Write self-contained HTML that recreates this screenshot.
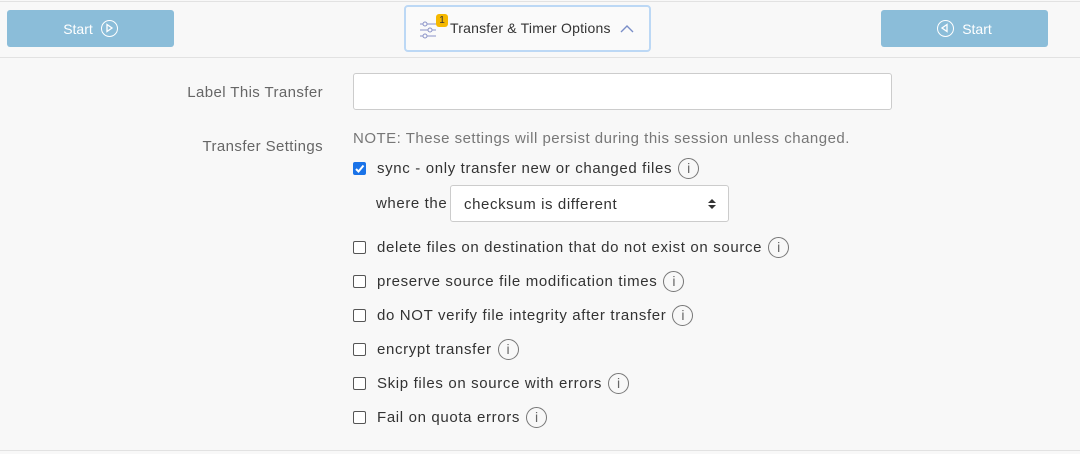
<!DOCTYPE html><html><head><style>
body{margin:0;width:1080px;height:454px;background:#f8f8f8;font-family:"Liberation Sans",sans-serif;position:relative;overflow:hidden;color:#333}
.a{position:absolute}
.btn{background:#8bbdd9;color:#fff;border-radius:3px;height:37px;top:10px;width:167px;font-size:14px;display:flex;align-items:center;justify-content:center;gap:8px}
.circ{width:17px;height:17px;border:1.5px solid #fff;border-radius:50%;box-sizing:border-box;display:inline-block;position:relative}
.lbl{color:#666;font-size:15px;right:757px;letter-spacing:0.4px}
.row{left:353px;font-size:15px;display:flex;align-items:center;height:22px;letter-spacing:0.65px}
.cb{width:13px;height:13px;border:1px solid #555;border-radius:2px;box-sizing:border-box;margin-right:11px;background:#fff}
.i{width:21px;height:21px;border:1.3px solid #777;border-radius:50%;box-sizing:border-box;margin-left:6px;text-align:center;font-size:14px;line-height:19px;color:#666;letter-spacing:0}
</style></head><body>
<div class="a" style="left:0;right:0;top:1px;height:1px;background:#e2e2e2"></div>
<div class="a" style="left:0;right:0;top:57px;height:1px;background:#e2e2e2"></div>
<div class="a" style="left:0;right:0;top:450px;height:1px;background:#e2e2e2"></div>
<div class="a btn" style="left:7px">Start <span class="circ"><svg width="14" height="14" style="position:absolute;left:0;top:0"><path d="M5 3.5 L10 7 L5 10.5Z" fill="none" stroke="#fff" stroke-width="1.3"/></svg></span></div>
<div class="a btn" style="left:881px"><span class="circ"><svg width="14" height="14" style="position:absolute;left:0;top:0"><path d="M9 3.5 L4 7 L9 10.5Z" fill="none" stroke="#fff" stroke-width="1.3"/></svg></span> Start</div>
<div class="a" style="left:404px;top:5px;width:243px;height:43px;border:2px solid #bcd8f5;border-radius:4px;background:#fafafa;font-size:14px;color:#333">
<svg class="a" style="left:14px;top:14px" width="16" height="18"><g stroke="#8b93c8" fill="none" stroke-width="1"><path d="M0 3H16M0 9H16M0 15H16"/><circle cx="5" cy="3" r="2" fill="#fafafa"/><circle cx="10" cy="9" r="2" fill="#fafafa"/><circle cx="5" cy="15" r="2" fill="#fafafa"/></g></svg>
<div class="a" style="left:30px;top:7px;width:12px;height:13px;background:#f5b800;border-radius:3px;font-size:10px;text-align:center;line-height:13px;color:#333">1</div>
<div class="a" style="left:44px;top:13px;letter-spacing:0.2px">Transfer &amp; Timer Options</div>
<svg class="a" style="left:214px;top:17px" width="14" height="9"><path d="M1 8L7 2L13 8" stroke="#7a8ec8" fill="none" stroke-width="1.4"/></svg>
</div>
<div class="a lbl" style="top:84px">Label This Transfer</div>
<div class="a" style="left:353px;top:73px;width:539px;height:37px;background:#fff;border:1px solid #ccc;border-radius:3px;box-sizing:border-box"></div>
<div class="a lbl" style="top:138px">Transfer Settings</div>
<div class="a" style="left:353px;top:130px;font-size:15px;color:#777;letter-spacing:0.5px">NOTE: These settings will persist during this session unless changed.</div>
<div class="a row" style="top:157px"><span class="cb" style="background:#1a73e8;border-color:#1a73e8;position:relative"><svg width="11" height="11" style="position:absolute;left:0;top:0"><path d="M2 6L4.5 8.5L9.5 2.5" stroke="#fff" stroke-width="2" fill="none"/></svg></span>sync - only transfer new or changed files<span class="i">i</span></div>
<div class="a" style="left:376px;top:195px;font-size:15px;letter-spacing:0.6px">where the</div>
<div class="a" style="left:450px;top:185px;width:279px;height:37px;background:#fff;border:1px solid #ccc;border-radius:3px;box-sizing:border-box;font-size:15px;padding:10px 0 0 13px;letter-spacing:0.6px">checksum is different<svg class="a" style="left:257px;top:12px" width="8" height="12"><path d="M0 5L4 1L8 5ZM0 7L4 11L8 7Z" fill="#333"/></svg></div>
<div class="a row" style="top:236px"><span class="cb"></span>delete files on destination that do not exist on source<span class="i">i</span></div>
<div class="a row" style="top:270px"><span class="cb"></span>preserve source file modification times<span class="i">i</span></div>
<div class="a row" style="top:304px"><span class="cb"></span>do NOT verify file integrity after transfer<span class="i">i</span></div>
<div class="a row" style="top:338px"><span class="cb"></span>encrypt transfer<span class="i">i</span></div>
<div class="a row" style="top:372px"><span class="cb"></span>Skip files on source with errors<span class="i">i</span></div>
<div class="a row" style="top:406px"><span class="cb"></span>Fail on quota errors<span class="i">i</span></div>
</body></html>
